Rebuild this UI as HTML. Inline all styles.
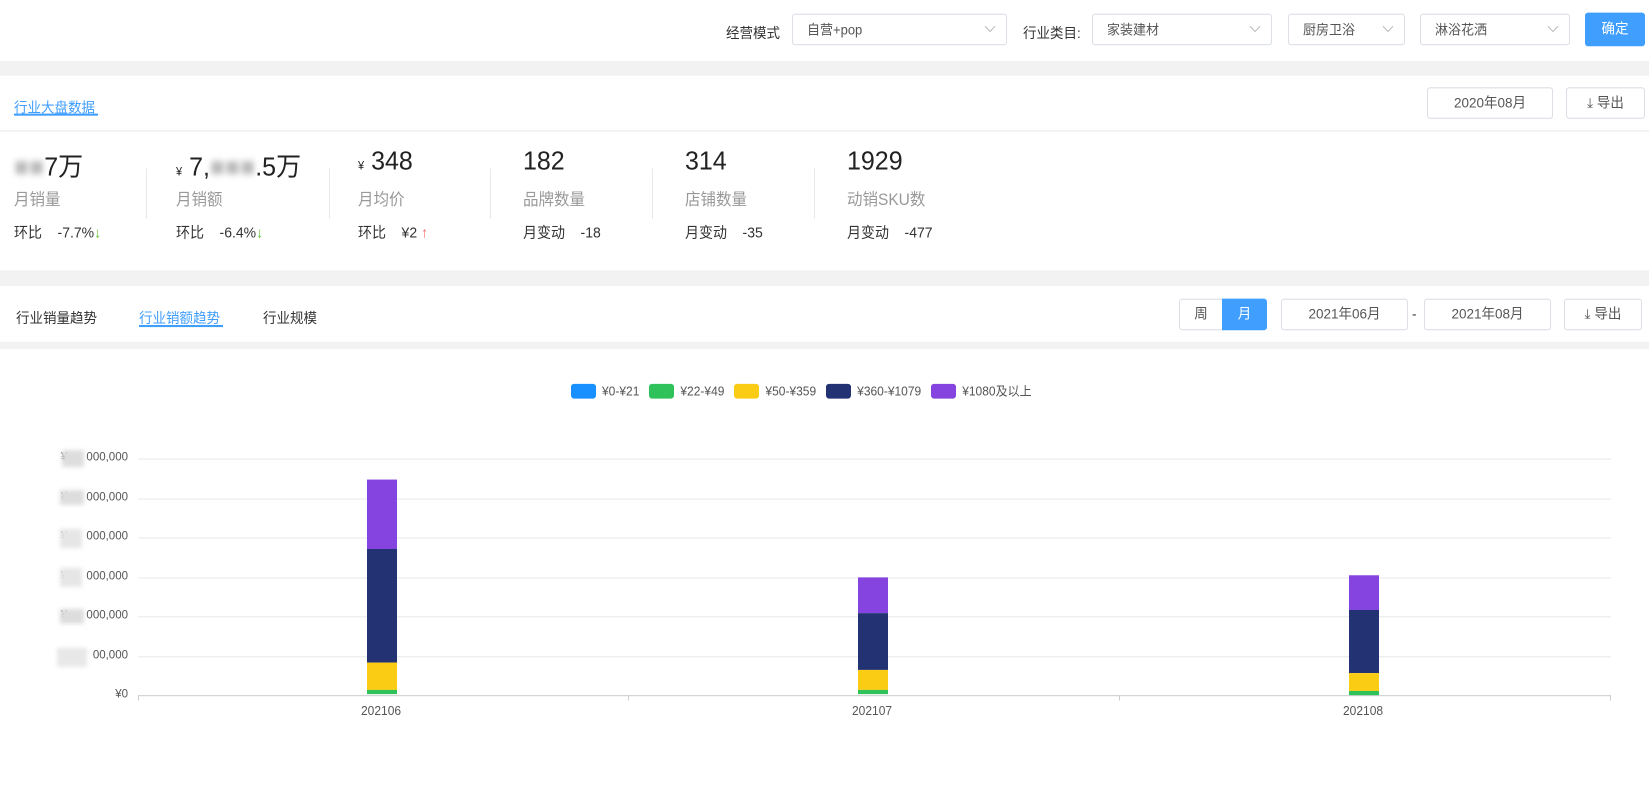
<!DOCTYPE html>
<html><head><meta charset="utf-8"><style>
*{box-sizing:border-box;margin:0;padding:0}
body{width:1649px;height:742px;background:#f2f2f2;font-family:"Liberation Sans","Noto Sans CJK SC",sans-serif;color:#333;position:relative;overflow:hidden;font-size:13.5px}
#w{position:absolute;left:0;top:0;width:1649px;height:706px;transform:scaleY(1.0517);transform-origin:0 0}
.a{position:absolute}
.card{position:absolute;left:0;width:1649px;background:#fff}
.sel{position:absolute;height:30px;border:1px solid #dcdfe6;border-radius:3px;background:#fff;font-size:13px;color:#555;padding:6px 14px;line-height:17px}
.sel svg{position:absolute;right:10px;top:10px}
.btn{position:absolute;height:30px;border:1px solid #dcdfe6;border-radius:3px;background:#fff;font-size:13.5px;color:#555;text-align:center;line-height:28px}
.big{position:absolute;top:139px;font-size:25px;color:#222}
.lab{position:absolute;top:178px;font-size:15.5px;color:#999}
.sm{position:absolute;top:211px;font-size:14px;color:#333}
.vd{position:absolute;top:160px;width:1px;height:48px;background:#e8e8e8}
.grid{position:absolute;left:138px;width:1473px;height:1px;background:#e9e9e9}
.yl{position:absolute;right:1521px;font-size:11.5px;color:#555;white-space:pre}
.blur{position:absolute;background:#ddd;filter:blur(2px)}
.lg{width:25px;height:14px;border-radius:3px;margin-right:6px;display:inline-block}
</style></head><body><div id="w">
<div class="card" style="top:0;height:58px"></div>
<div class="a" style="left:726px;top:20px">经营模式</div>
<div class="sel" style="left:792px;top:13px;width:215px">自营+pop<svg width="12" height="8"><path d="M1 1l5 5 5-5" stroke="#bbb" fill="none"/></svg></div>
<div class="a" style="left:1023px;top:20px">行业类目:</div>
<div class="sel" style="left:1092px;top:13px;width:180px">家装建材<svg width="12" height="8"><path d="M1 1l5 5 5-5" stroke="#bbb" fill="none"/></svg></div>
<div class="sel" style="left:1288px;top:13px;width:117px">厨房卫浴<svg width="12" height="8"><path d="M1 1l5 5 5-5" stroke="#bbb" fill="none"/></svg></div>
<div class="sel" style="left:1420px;top:13px;width:150px">淋浴花洒<svg width="12" height="8"><path d="M1 1l5 5 5-5" stroke="#bbb" fill="none"/></svg></div>
<div class="a" style="left:1585px;top:12px;width:60px;height:32px;background:#409eff;border-radius:3px;color:#fff;text-align:center;line-height:32px">确定</div>

<div class="card" style="top:72px;height:185px"></div>
<div class="a" style="left:0;top:124px;width:1649px;height:1px;background:#e8e8e8"></div>
<div class="a" style="left:14px;top:91px;color:#409eff">行业大盘数据</div>
<div class="a" style="left:14px;top:108px;width:84px;height:2px;background:#409eff"></div>
<div class="btn" style="left:1427px;top:83px;width:126px">2020年08月</div>
<div class="btn" style="left:1566px;top:83px;width:79px">⤓ 导出</div>

<div class="big" style="left:14px"><span style="color:#bbb;filter:blur(3px)">■■</span>7万</div>
<div class="big" style="left:176px"><span style="font-size:11px">¥</span> 7,<span style="color:#bbb;filter:blur(3px)">■■■</span>.5万</div>
<div class="big" style="left:358px"><span style="font-size:11px">¥</span> 348</div>
<div class="big" style="left:523px">182</div>
<div class="big" style="left:685px">314</div>
<div class="big" style="left:847px">1929</div>
<div class="lab" style="left:14px">月销量</div><div class="lab" style="left:176px">月销额</div><div class="lab" style="left:358px">月均价</div><div class="lab" style="left:523px">品牌数量</div><div class="lab" style="left:685px">店铺数量</div><div class="lab" style="left:847px">动销SKU数</div>
<div class="sm" style="left:14px">环比 &nbsp;&nbsp;&nbsp;-7.7%<span style="color:#67c23a">↓</span></div>
<div class="sm" style="left:176px">环比 &nbsp;&nbsp;&nbsp;-6.4%<span style="color:#67c23a">↓</span></div>
<div class="sm" style="left:358px">环比 &nbsp;&nbsp;&nbsp;¥2 <span style="color:#f56c6c">↑</span></div>
<div class="sm" style="left:523px">月变动 &nbsp;&nbsp;&nbsp;-18</div>
<div class="sm" style="left:685px">月变动 &nbsp;&nbsp;&nbsp;-35</div>
<div class="sm" style="left:847px">月变动 &nbsp;&nbsp;&nbsp;-477</div>
<div class="vd" style="left:146px"></div><div class="vd" style="left:329px"></div><div class="vd" style="left:490px"></div><div class="vd" style="left:652px"></div><div class="vd" style="left:814px"></div>

<div class="card" style="top:272px;height:53px"></div>
<div class="a" style="left:16px;top:291px">行业销量趋势</div>
<div class="a" style="left:139px;top:291px;color:#409eff">行业销额趋势</div>
<div class="a" style="left:139px;top:309px;width:84px;height:2px;background:#409eff"></div>
<div class="a" style="left:263px;top:291px">行业规模</div>
<div class="btn" style="left:1179px;top:284px;width:44px;border-radius:3px 0 0 3px">周</div>
<div class="a" style="left:1222px;top:284px;width:45px;height:30px;background:#409eff;color:#fff;text-align:center;line-height:30px;border-radius:0 3px 3px 0">月</div>
<div class="btn" style="left:1281px;top:284px;width:127px">2021年06月</div>
<div class="a" style="left:1412px;top:291px">-</div>
<div class="btn" style="left:1424px;top:284px;width:127px">2021年08月</div>
<div class="btn" style="left:1564px;top:284px;width:78px">⤓ 导出</div>

<div class="card" style="top:332px;height:420px"></div>
<div class="a" style="left:571px;top:363px;font-size:12px;color:#555;display:flex;align-items:center;white-space:nowrap">
<span class="lg" style="background:#1890ff"></span>¥0-¥21&nbsp;&nbsp;&nbsp;
<span class="lg" style="background:#2fc25b"></span>¥22-¥49&nbsp;&nbsp;&nbsp;
<span class="lg" style="background:#facc14"></span>¥50-¥359&nbsp;&nbsp;&nbsp;
<span class="lg" style="background:#223273"></span>¥360-¥1079&nbsp;&nbsp;&nbsp;
<span class="lg" style="background:#8543e0"></span>¥1080及以上</div>

<div class="grid" style="top:436px"></div><div class="grid" style="top:474px"></div><div class="grid" style="top:511px"></div><div class="grid" style="top:549px"></div><div class="grid" style="top:586px"></div><div class="grid" style="top:624px"></div>
<div class="grid" style="top:661px;background:#ccc"></div>
<div class="a" style="left:138px;top:661px;width:1px;height:5px;background:#ccc"></div><div class="a" style="left:628px;top:661px;width:1px;height:5px;background:#ccc"></div><div class="a" style="left:1119px;top:661px;width:1px;height:5px;background:#ccc"></div><div class="a" style="left:1610px;top:661px;width:1px;height:5px;background:#ccc"></div>
<div class="yl" style="top:429px">¥      000,000</div>
<div class="yl" style="top:467px">¥      000,000</div>
<div class="yl" style="top:504px">¥      000,000</div>
<div class="yl" style="top:542px">¥      000,000</div>
<div class="yl" style="top:579px">¥      000,000</div>
<div class="yl" style="top:617px">       00,000</div>
<div class="yl" style="top:654px">¥0</div>
<div class="blur" style="left:62px;top:428px;width:22px;height:16px"></div>
<div class="blur" style="left:60px;top:466px;width:24px;height:14px"></div>
<div class="blur" style="left:60px;top:503px;width:22px;height:18px;background:#e6e6e6"></div>
<div class="blur" style="left:60px;top:540px;width:22px;height:18px;background:#e6e6e6"></div>
<div class="blur" style="left:60px;top:579px;width:24px;height:14px"></div>
<div class="blur" style="left:57px;top:616px;width:30px;height:18px;background:#e8e8e8"></div>

<div class="a" style="left:367px;top:456px;width:30px">
<div style="height:66px;background:#8543e0"></div><div style="height:108px;background:#223273"></div><div style="height:26px;background:#facc14"></div><div style="height:4px;background:#2fc25b"></div></div>
<div class="a" style="left:858px;top:549px;width:30px">
<div style="height:34px;background:#8543e0"></div><div style="height:54px;background:#223273"></div><div style="height:19px;background:#facc14"></div><div style="height:4px;background:#2fc25b"></div></div>
<div class="a" style="left:1349px;top:547px;width:30px">
<div style="height:33px;background:#8543e0"></div><div style="height:60px;background:#223273"></div><div style="height:17px;background:#facc14"></div><div style="height:4px;background:#2fc25b"></div></div>
<div class="a" style="left:361px;top:669px;font-size:12px;color:#555">202106</div>
<div class="a" style="left:852px;top:669px;font-size:12px;color:#555">202107</div>
<div class="a" style="left:1343px;top:669px;font-size:12px;color:#555">202108</div>
</div></body></html>
